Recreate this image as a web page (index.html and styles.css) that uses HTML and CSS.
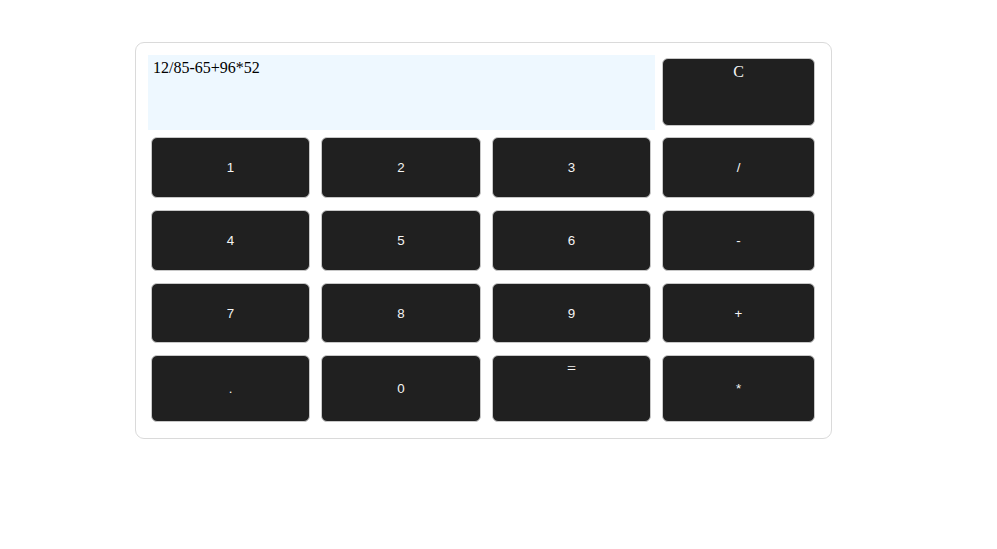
FILE: index.html
```html
<!DOCTYPE html>
<html>
<head>
<meta charset="utf-8">
<link rel="stylesheet" href="styles.css">
</head>
<body>
<div class="calc">
  <div class="display">12/85-65+96*52</div>
  <button class="key key-top">C</button>
  <button class="key">1</button>
  <button class="key">2</button>
  <button class="key">3</button>
  <button class="key">/</button>
  <button class="key">4</button>
  <button class="key">5</button>
  <button class="key">6</button>
  <button class="key">-</button>
  <button class="key">7</button>
  <button class="key">8</button>
  <button class="key">9</button>
  <button class="key">+</button>
  <button class="key">.</button>
  <button class="key">0</button>
  <button class="key key-eq">=</button>
  <button class="key">*</button>
</div>
</body>
</html>
```

FILE: styles.css
```css
html, body {
  margin: 0;
  padding: 0;
  background: #ffffff;
}

body {
  padding: 42px 0 0 135px;
}

.calc {
  box-sizing: border-box;
  width: 697px;
  height: 397px;
  border: 1px solid #dadada;
  border-radius: 9px;
  padding: 12px 11px 11px 12px;
  display: grid;
  grid-template-columns: 166px 167px 166px 160px;
  grid-template-rows: 74px 69px 69px 68px 75px;
  column-gap: 4px;
  row-gap: 4px;
}

.display {
  grid-column: 1 / span 3;
  height: 75px;
  box-sizing: border-box;
  background: #eef8ff;
  padding: 4px 5px;
  font-family: "Liberation Serif", "Times New Roman", serif;
  font-size: 16px;
  color: #000;
}

.key {
  margin: 4px 4px 4px 3px;
  background: #202020;
  border: 1px solid #c8c8c8;
  border-radius: 6px;
  color: #f4f4f4;
  font-family: "Liberation Sans", Arial, sans-serif;
  font-size: 13.333px;
  padding: 0;
  display: flex;
  align-items: center;
  justify-content: center;
}

.key-top {
  margin: 3px 4px 3px 3px;
  align-items: flex-start;
  padding-top: 4px;
  font-family: "Liberation Serif", "Times New Roman", serif;
  font-size: 16px;
}

.key-eq {
  align-items: flex-start;
  padding-top: 4px;
  font-family: "Liberation Serif", "Times New Roman", serif;
  font-size: 16px;
}
```
